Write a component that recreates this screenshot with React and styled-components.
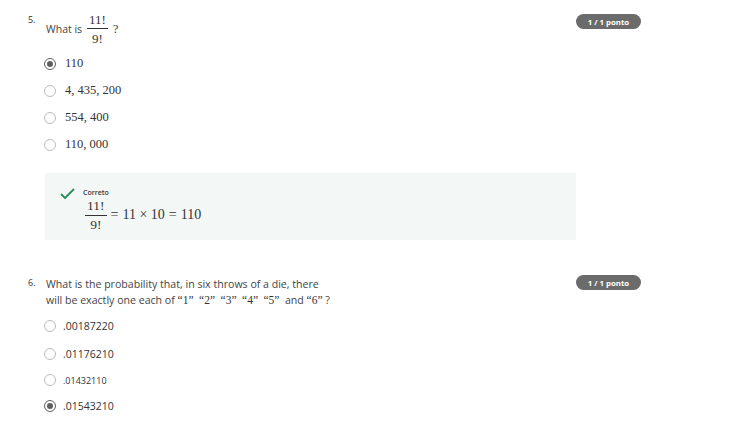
import React from "react";
import styled, { createGlobalStyle } from "styled-components";

const Global = createGlobalStyle`
  html, body { margin: 0; padding: 0; background: #fff; }
  body { font-family: "Open Sans", "Noto Sans", sans-serif; color: #333; }
`;

const Page = styled.div`
  width: 613px;
  padding: 13px 0 0 28px;
  display: flex;
  flex-direction: column;
`;

const Question = styled.section`
  display: flex;
  flex-direction: column;
  margin-bottom: ${(p) => p.$gap || 0}px;
`;

const Header = styled.div`
  display: flex;
  align-items: flex-start;
`;

const Num = styled.div`
  width: 18px;
  flex: none;
  font-size: 9px;
  line-height: 11px;
  color: #333;
  padding-top: ${(p) => p.$top || 0}px;
`;

const Prompt = styled.div`
  flex: 1;
  font-size: 10.5px;
  line-height: 16px;
  color: #444;
  display: flex;
  align-items: center;
  flex-wrap: wrap;
`;

const PromptText = styled.div`
  flex: 1;
  font-size: 10.6px;
  line-height: 16px;
  color: #444;
`;

const Badge = styled.div`
  flex: none;
  width: 65px;
  height: 15px;
  border-radius: 8px;
  background: #6b6b6b;
  color: #fff;
  font-family: "Open Sans", sans-serif;
  font-weight: 700;
  font-size: 7.8px;
  display: flex;
  align-items: center;
  justify-content: center;
  margin-top: ${(p) => p.$top || 0}px;
`;

const Frac = styled.span`
  display: inline-flex;
  flex-direction: column;
  align-items: center;
  font-family: "Liberation Serif", "DejaVu Serif", serif;
  font-size: ${(p) => p.$size || 13}px;
  line-height: 1;
  color: #333;
  margin: 0 ${(p) => p.$mx || 0}px;
`;

const FracTop = styled.span`
  padding: 0 2px 2px;
  border-bottom: 1px solid #333;
`;

const FracBottom = styled.span`
  padding-top: ${(p) => p.$pt ?? 3}px;
`;

const Serif = styled.span`
  font-family: "Liberation Serif", "DejaVu Serif", serif;
  font-size: ${(p) => p.$size || 12}px;
  color: #333;
`;

const Options = styled.div`
  display: flex;
  flex-direction: column;
  padding-left: 16px;
  margin-top: ${(p) => p.$top || 0}px;
`;

const Option = styled.label`
  display: flex;
  align-items: center;
  height: ${(p) => p.$h || 27}px;
  gap: ${(p) => p.$gap || 9}px;
`;

const Radio = styled.span`
  width: 12px;
  height: 12px;
  border-radius: 50%;
  box-sizing: border-box;
  border: 1px solid ${(p) => (p.$on ? "#5f5f5f" : "#bdbdbd")};
  display: flex;
  align-items: center;
  justify-content: center;
  flex: none;
  &::after {
    content: "";
    width: 6px;
    height: 6px;
    border-radius: 50%;
    background: #5f5f5f;
    display: ${(p) => (p.$on ? "block" : "none")};
  }
`;

const MathText = styled.span`
  font-family: "Liberation Serif", "DejaVu Serif", serif;
  font-size: 12.5px;
  color: #333;
`;

const SansText = styled.span`
  font-size: ${(p) => p.$size || 10.5}px;
  color: #333;
`;

const Feedback = styled.div`
  margin: 15px 0 0 17px;
  width: 531px;
  height: 67px;
  box-sizing: border-box;
  background: #f3f8f7;
  padding: 15px 0 0 15px;
  display: flex;
  gap: 8px;
`;

const Check = styled.svg`
  flex: none;
  margin-top: 0px;
`;

const FeedbackBody = styled.div`
  display: flex;
  flex-direction: column;
`;

const Label = styled.div`
  font-size: 7px;
  line-height: 9px;
  color: #333;
  font-weight: 600;
`;

const Equation = styled.div`
  display: flex;
  align-items: center;
  margin-left: 2px;
  margin-top: 2px;
  font-family: "Liberation Serif", "DejaVu Serif", serif;
  font-size: 14px;
  color: #333;
`;

const Op = styled.span`
  margin: 0 ${(p) => p.$m || 4}px;
`;

const Q = ({ children }) => <Serif $size={11.5}>{children}</Serif>;

export default function App() {
  return (
    <>
      <Global />
      <Page>
        <Question $gap={36}>
          <Header>
            <Num $top={1}>5.</Num>
            <Prompt>
              What is
              <Frac $mx={5}>
                <FracTop>11!</FracTop>
                <FracBottom>9!</FracBottom>
              </Frac>
              <Serif $size={12}>?</Serif>
            </Prompt>
            <Badge $top={1}>1 / 1 ponto</Badge>
          </Header>
          <Options $top={5}>
            <Option>
              <Radio $on />
              <MathText>110</MathText>
            </Option>
            <Option>
              <Radio />
              <MathText>4, 435, 200</MathText>
            </Option>
            <Option>
              <Radio />
              <MathText>554, 400</MathText>
            </Option>
            <Option>
              <Radio />
              <MathText>110, 000</MathText>
            </Option>
          </Options>
          <Feedback>
            <Check width="15" height="12" viewBox="0 0 15 12">
              <polyline
                points="1.5,6.5 5,10 13.5,1.5"
                fill="none"
                stroke="#2a8c5a"
                strokeWidth="1.8"
                strokeLinecap="round"
                strokeLinejoin="round"
              />
            </Check>
            <FeedbackBody>
              <Label>Correto</Label>
              <Equation>
                <Frac $size={13.5}>
                  <FracTop>11!</FracTop>
                  <FracBottom $pt={2}>9!</FracBottom>
                </Frac>
                <Op $m={4}>=</Op>11<Op $m={3.5}>×</Op>10<Op $m={4}>=</Op>110
              </Equation>
            </FeedbackBody>
          </Feedback>
        </Question>
        <Question>
          <Header>
            <Num $top={1}>6.</Num>
            <PromptText>
              What is the probability that, in six throws of a die, there
              <br />
              will be exactly one each of <Q>“1”</Q>&nbsp; <Q>“2”</Q>&nbsp;{" "}
              <Q>“3”</Q>&nbsp; <Q>“4”</Q>&nbsp; <Q>“5”</Q>&nbsp; and <Q>“6”</Q> ?
            </PromptText>
            <Badge $top={-1}>1 / 1 ponto</Badge>
          </Header>
          <Options $top={4}>
            <Option $gap={7} $h={28}>
              <Radio />
              <SansText>.00187220</SansText>
            </Option>
            <Option $gap={7} $h={27}>
              <Radio />
              <SansText>.01176210</SansText>
            </Option>
            <Option $gap={7} $h={26}>
              <Radio />
              <SansText $size={9}>.01432110</SansText>
            </Option>
            <Option $gap={7} $h={26}>
              <Radio $on />
              <SansText>.01543210</SansText>
            </Option>
          </Options>
        </Question>
      </Page>
    </>
  );
}
